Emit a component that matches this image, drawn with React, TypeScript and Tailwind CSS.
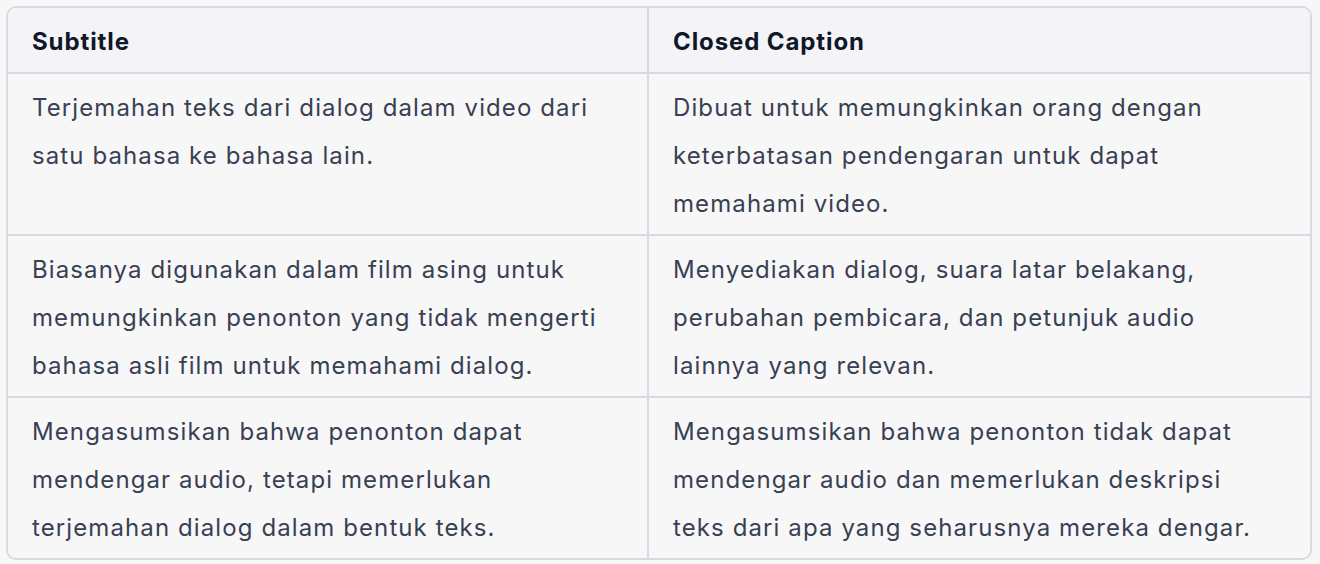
const rows = [
  [
    "Terjemahan teks dari dialog dalam video dari satu bahasa ke bahasa lain.",
    "Dibuat untuk memungkinkan orang dengan keterbatasan pendengaran untuk dapat memahami video.",
  ],
  [
    "Biasanya digunakan dalam film asing untuk memungkinkan penonton yang tidak mengerti bahasa asli film untuk memahami dialog.",
    "Menyediakan dialog, suara latar belakang, perubahan pembicara, dan petunjuk audio lainnya yang relevan.",
  ],
  [
    "Mengasumsikan bahwa penonton dapat mendengar audio, tetapi memerlukan terjemahan dialog dalam bentuk teks.",
    "Mengasumsikan bahwa penonton tidak dapat mendengar audio dan memerlukan deskripsi teks dari apa yang seharusnya mereka dengar.",
  ],
];

export default function App() {
  return (
    <main
      className="min-h-screen bg-[#f7f7f8] p-[6px]"
      style={{ fontFamily: "Inter, 'Noto Sans', sans-serif" }}
    >
      <div className="w-[1306px] rounded-[10px] border-2 border-[#d9d9e3] overflow-hidden">
        <div className="grid grid-cols-[641px_1fr] bg-[#f4f4f6] border-b-2 border-[#d9d9e3]">
          <div className="border-r-2 border-[#d9d9e3] px-6 pt-[10px] pb-[6px] text-[24px] leading-[48px] font-bold tracking-[0.9px] text-[#0f172a]">
            Subtitle
          </div>
          <div className="px-6 pt-[10px] pb-[6px] text-[24px] leading-[48px] font-bold tracking-[0.9px] text-[#0f172a]">
            Closed Caption
          </div>
        </div>
        {rows.map((r, i) => (
          <div
            key={i}
            className={
              i < rows.length - 1
                ? "grid grid-cols-[641px_1fr] bg-[#f7f7f8] border-b-2 border-[#d9d9e3]"
                : "grid grid-cols-[641px_1fr] bg-[#f7f7f8]"
            }
          >
            <div className="border-r-2 border-[#d9d9e3] pl-6 pr-6 pt-[10px] pb-[6px] text-[24px] leading-[48px] tracking-[1.1px] text-[#374151]">
              {r[0]}
            </div>
            <div className="pl-6 pr-[40px] pt-[10px] pb-[6px] text-[24px] leading-[48px] tracking-[1.1px] text-[#374151]">
              {r[1]}
            </div>
          </div>
        ))}
      </div>
    </main>
  );
}
